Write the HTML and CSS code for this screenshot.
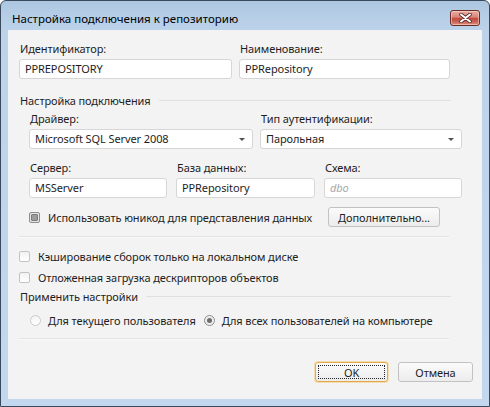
FILE: index.html
```html
<!DOCTYPE html>
<html lang="ru">
<head>
<meta charset="utf-8">
<title>Настройка подключения к репозиторию</title>
<link rel="stylesheet" href="styles.css">
</head>
<body>
<div class="window">
  <div class="titlebar">
    <span class="title">Настройка подключения к репозиторию</span>
    <div class="close">
      <svg width="13" height="10" viewBox="0 0 13 10">
        <path d="M2 1.5 L11 8.5 M11 1.5 L2 8.5" stroke="#5b2b2b" stroke-width="3.6" stroke-linecap="round"/>
        <path d="M2 1.5 L11 8.5 M11 1.5 L2 8.5" stroke="#ffffff" stroke-width="2" stroke-linecap="round"/>
      </svg>
    </div>
  </div>
  <div class="frame">
    <div class="client">
      <div class="row-top">
        <div class="field">
          <div class="label">Идентификатор:</div>
          <div class="input">PPREPOSITORY</div>
        </div>
        <div class="field">
          <div class="label">Наименование:</div>
          <div class="input">PPRepository</div>
        </div>
      </div>

      <div class="group-header">Настройка подключения</div>
      <div class="group-body">
        <div class="row-driver">
          <div class="field">
            <div class="label">Драйвер:</div>
            <div class="input combo">Microsoft SQL Server 2008<span class="arrow"></span></div>
          </div>
          <div class="field">
            <div class="label">Тип аутентификации:</div>
            <div class="input combo">Парольная<span class="arrow"></span></div>
          </div>
        </div>
        <div class="row-server">
          <div class="field">
            <div class="label">Сервер:</div>
            <div class="input">MSServer</div>
          </div>
          <div class="field">
            <div class="label">База данных:</div>
            <div class="input">PPRepository</div>
          </div>
          <div class="field">
            <div class="label">Схема:</div>
            <div class="input placeholder">dbo</div>
          </div>
        </div>
        <div class="row-unicode">
          <div class="check-line">
            <span class="checkbox mixed"></span>
            <span>Использовать юникод для представления данных</span>
          </div>
          <div class="button more">Дополнительно...</div>
        </div>
      </div>

      <div class="separator sep-1"></div>

      <div class="check-line opt opt-1">
        <span class="checkbox"></span>
        <span>Кэширование сборок только на локальном диске</span>
      </div>
      <div class="check-line opt opt-2">
        <span class="checkbox"></span>
        <span>Отложенная загрузка дескрипторов объектов</span>
      </div>

      <div class="group-header apply">Применить настройки</div>
      <div class="radios">
        <div class="radio-line">
          <span class="radio"></span>
          <span>Для текущего пользователя</span>
        </div>
        <div class="radio-line">
          <span class="radio checked"></span>
          <span>Для всех пользователей на компьютере</span>
        </div>
      </div>

      <div class="separator sep-2"></div>

      <div class="buttons">
        <div class="button ok"><span class="focus">OK</span></div>
        <div class="button cancel">Отмена</div>
      </div>
    </div>
  </div>
</div>
</body>
</html>
```

FILE: styles.css
```css
html, body {
  margin: 0;
  padding: 0;
  background: #ffffff;
}

body {
  font-family: "Noto Sans", "Open Sans", sans-serif;
  font-size: 11px;
  letter-spacing: -0.1px;
  color: #1e1e1e;
}

.window {
  width: 490px;
  height: 407px;
  box-sizing: border-box;
  border: 1px solid #3a4a5c;
  border-radius: 6px 6px 0 0;
  background: linear-gradient(#aec7e1 0px, #bcd3ea 30px, #c3d8ee 100%);
  display: flex;
  flex-direction: column;
}

.titlebar {
  height: 29px;
  display: flex;
  align-items: flex-start;
  justify-content: space-between;
  padding: 0 9px 0 11px;
  box-sizing: border-box;
}

.title {
  font-size: 11.5px;
  letter-spacing: 0;
  color: #000;
  margin-top: 9px;
  line-height: 17px;
}

.close {
  margin-top: 9px;
  width: 30px;
  height: 16px;
  box-sizing: border-box;
  border: 1px solid #6a2e2a;
  border-radius: 3px;
  background: linear-gradient(#e9aea3 0%, #d98478 45%, #c24b3e 50%, #c65a4c 70%, #df8c7e 100%);
  box-shadow: inset 0 0 0 1px rgba(255, 220, 210, 0.55);
  display: flex;
  align-items: center;
  justify-content: center;
}

.close svg {
  display: block;
}

.frame {
  flex: 1;
  padding: 0 7px 7px 7px;
  display: flex;
}

.client {
  flex: 1;
  background: #f3f3f3;
  padding: 11px 9px 0 11px;
  box-sizing: border-box;
}

.label {
  line-height: 15px;
  height: 15px;
  margin-bottom: 3px;
  padding-left: 1px;
  white-space: nowrap;
}

.input {
  height: 20px;
  box-sizing: border-box;
  border: 1px solid #d6d6d6;
  border-radius: 3px;
  background: #ffffff;
  line-height: 18px;
  padding-left: 5px;
  white-space: nowrap;
  overflow: hidden;
  position: relative;
}

.placeholder {
  color: #a8a8a8;
  font-style: italic;
}

.combo .arrow {
  position: absolute;
  right: 7px;
  top: 8px;
  width: 0;
  height: 0;
  border-left: 3px solid transparent;
  border-right: 3px solid transparent;
  border-top: 3px solid #505050;
}

.row-top {
  display: grid;
  grid-template-columns: 213px 211px;
  column-gap: 7px;
}

.group-header {
  display: flex;
  align-items: center;
  line-height: 15px;
  margin-top: 14px;
  padding-left: 1px;
  width: 431px;
  white-space: nowrap;
}

.group-header::after {
  content: "";
  flex: 1;
  height: 1px;
  background: #e0e0e0;
  margin-left: 8px;
}

.group-body {
  padding-left: 10px;
  margin-top: 3px;
}

.row-driver {
  display: grid;
  grid-template-columns: 224px 202px;
  column-gap: 7px;
}

.row-server {
  display: grid;
  grid-template-columns: 138px 139px 138px;
  column-gap: 9px;
  margin-top: 11px;
}

.row-unicode {
  display: flex;
  align-items: center;
  justify-content: space-between;
  width: 411px;
  margin-top: 9px;
}

.check-line {
  display: flex;
  align-items: center;
  gap: 8px;
  line-height: 15px;
  white-space: nowrap;
}

.checkbox {
  width: 11px;
  height: 11px;
  box-sizing: border-box;
  border: 1px solid #c3c3c3;
  border-radius: 2px;
  background: linear-gradient(#f2f2f2, #ffffff);
  flex: none;
  position: relative;
}

.checkbox.mixed {
  border-color: #8c8c8c;
  background: #e8e8e8;
}

.checkbox.mixed::after {
  content: "";
  position: absolute;
  left: 1px;
  top: 1px;
  width: 7px;
  height: 7px;
  box-sizing: border-box;
  border: 1px solid #7a7a7a;
  border-radius: 1px;
  background: #9c9c9c;
}

.button {
  height: 20px;
  box-sizing: border-box;
  border: 1px solid #c2c2c2;
  border-radius: 3px;
  background: linear-gradient(#fbfbfb, #ececec);
  display: flex;
  align-items: center;
  justify-content: center;
  line-height: 15px;
  white-space: nowrap;
}

.more {
  width: 112px;
}

.separator {
  width: 430px;
  height: 1px;
  background: #e2e2e2;
  border-bottom: 1px solid #fafafa;
}

.sep-1 {
  margin-top: 9px;
}

.opt {
  gap: 8px;
}

.opt-1 {
  margin-top: 10px;
  height: 17px;
}

.opt-2 {
  margin-top: 4px;
  height: 17px;
}

.group-header.apply {
  margin-top: 3px;
}

.radios {
  display: flex;
  align-items: center;
  gap: 8px;
  padding-left: 11px;
  margin-top: 8px;
  height: 16px;
}

.radio-line {
  display: flex;
  align-items: center;
  gap: 7px;
  white-space: nowrap;
}

.radio {
  width: 11px;
  height: 11px;
  box-sizing: border-box;
  border: 1px solid #cbcbcb;
  border-radius: 50%;
  background: linear-gradient(#f4f4f4, #ffffff);
  flex: none;
  position: relative;
}

.radio.checked {
  border-color: #8e8e8e;
  background: #eeeeee;
}

.radio.checked::after {
  content: "";
  position: absolute;
  left: 2px;
  top: 2px;
  width: 5px;
  height: 5px;
  border-radius: 50%;
  background: #6c6c6c;
}

.sep-2 {
  margin-top: 10px;
}

.buttons {
  display: flex;
  justify-content: flex-end;
  gap: 10px;
  margin-top: 22px;
}

.ok {
  width: 73px;
  border-color: #e3a84a;
  box-shadow: 0 0 0 1px #f7dcae;
  padding: 2px;
}

.ok .focus {
  flex: 1;
  align-self: stretch;
  border: 1px dotted #222;
  display: flex;
  align-items: center;
  justify-content: center;
}

.cancel {
  width: 75px;
}
```
